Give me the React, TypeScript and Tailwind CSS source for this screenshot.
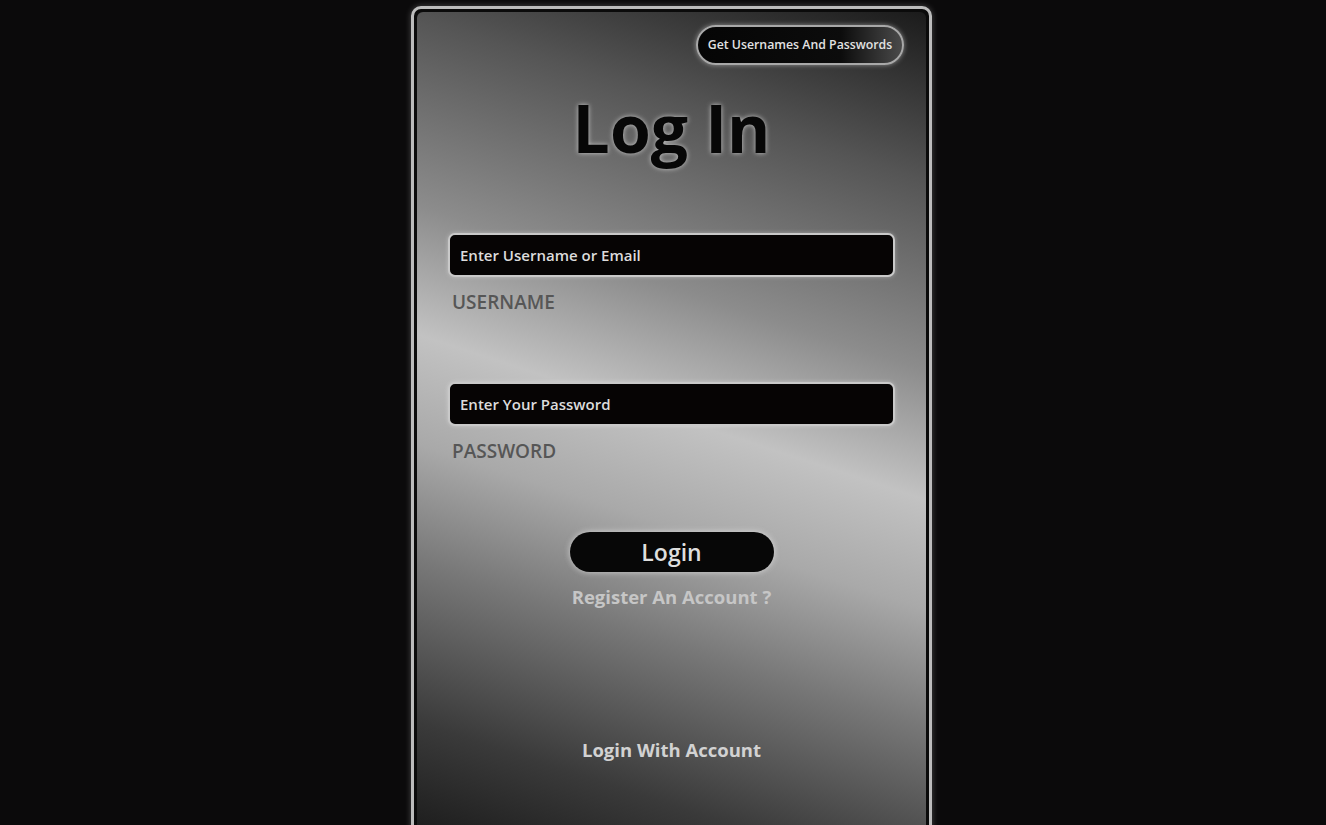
const font = "font-['Open_Sans','Noto_Sans',sans-serif]";

const Field = ({ placeholder, label, type }: { placeholder: string; label: string; type: string }) => (
  <div className="flex flex-col">
    <input
      type={type}
      placeholder={placeholder}
      className="h-[44px] w-full rounded-[7px] border-2 border-[#c9c9c9] bg-[#060404] px-[10px] text-[15px] font-semibold text-[#e0e0e0] outline-none shadow-[0_0_4px_rgba(255,255,255,0.35)] placeholder:text-[#dcdcdc]"
    />
    <span className="mt-[13px] pl-[4px] text-[19px] leading-[24px] font-semibold text-[#565656]">{label}</span>
  </div>
);

export default function App() {
  return (
    <div className={`h-screen overflow-hidden bg-[#0b0a0b] ${font}`}>
      <div className="ml-[411px] mt-[6px] w-[521px] rounded-[10px] border-[3px] border-[#bcbcbc] bg-[#0b0b0b] p-[3px] shadow-[0_0_6px_rgba(255,255,255,0.25)]">
        <div className="flex h-[830px] flex-col rounded-[6px] bg-[linear-gradient(198deg,#1b1b1b_0%,#555_17%,#8c8c8c_36%,#c2c2c2_49%,#a9a9a9_60%,#777_72%,#3a3a3a_88%,#1a1a1a_100%)] px-[31px]">
          {/* top button */}
          <div className="mt-[13px] flex justify-end">
            <button className="-mr-[9px] h-[40px] w-[208px] rounded-full border-2 border-[#a8a8a8] bg-[linear-gradient(90deg,#050505_0%,#0c0c0c_70%,#4a4a4a_100%)] text-[12.3px] font-semibold text-[#e2e2e2] shadow-[0_0_5px_rgba(255,255,255,0.45)]">
              Get Usernames And Passwords
            </button>
          </div>

          <h1 className="mt-[29px] text-center text-[66px] leading-none font-bold text-[#070707] [text-shadow:0_0_5px_#c8c8c8]">
            Log In
          </h1>

          <div className="mt-[73px]">
            <Field placeholder="Enter Username or Email" label="USERNAME" type="text" />
          </div>
          <div className="mt-[68px]">
            <Field placeholder="Enter Your Password" label="PASSWORD" type="password" />
          </div>

          <div className="mt-[69px] flex flex-col items-center">
            <button className="h-[40px] w-[204px] rounded-full bg-[#070707] text-[23px] font-semibold text-[#dedede] shadow-[0_0_6px_rgba(235,235,235,0.7)]">
              Login
            </button>
            <a className="mt-[13px] text-[18.5px] leading-[24px] font-bold text-[#c6c6c6]">Register An Account ?</a>
          </div>

          <div className="mt-[129px] text-center text-[18.5px] leading-[24px] font-bold text-[#d2d2d2]">
            Login With Account
          </div>
        </div>
      </div>
    </div>
  );
}
